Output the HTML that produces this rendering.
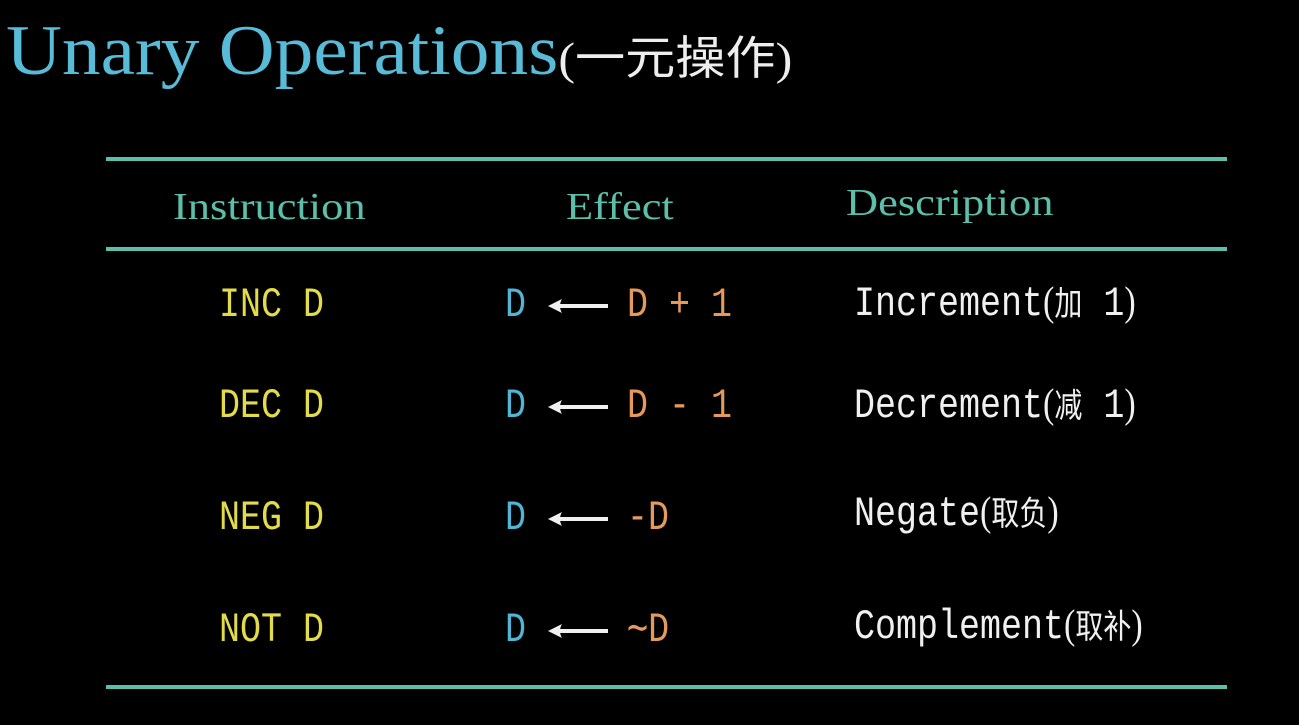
<!DOCTYPE html>
<html><head><meta charset="utf-8"><style>
body{margin:0;width:1299px;height:725px;background:#000;overflow:hidden;position:relative;font-family:"Liberation Serif","Noto Serif CJK SC",serif}
.a{position:absolute;white-space:nowrap}
.line{position:absolute;left:106px;width:1121px;height:4px;background:#5cbfa9}
.m{font-family:"Liberation Mono","Noto Sans CJK SC",monospace;font-size:35px;transform:scaleY(1.2);transform-origin:0 100%;line-height:1}
.h{color:#5cbfa9;font-size:38px;line-height:1;transform:scaleX(1.17);transform-origin:0 0}
.y{color:#e3dc4a}.b{color:#4fb6d6}.o{color:#e59a5c}.w{color:#f0f0f0}
.cj{font-family:"Noto Sans CJK SC",sans-serif;font-size:28px}
.p{font-family:"Liberation Serif",serif;font-size:34px}
.arr{position:absolute;left:548px;width:60px;height:16px}
</style></head><body>
<div class="a" style="left:6px;top:16px;font-size:71px;color:#58bcd8;line-height:1;transform:scaleX(1.09);transform-origin:0 0">Unary Operations<span style="color:#eee;font-size:46px;font-family:'Liberation Serif','Noto Sans CJK SC',sans-serif">(一元操作)</span></div>
<div class="line" style="top:157px"></div>
<div class="line" style="top:247px"></div>
<div class="line" style="top:685px"></div>
<div class="a h" style="left:173px;top:188px">Instruction</div>
<div class="a h" style="left:566px;top:188px">Effect</div>
<div class="a h" style="left:846px;top:184px">Description</div>

<svg width="0" height="0" style="position:absolute"><defs><g id="ar"><path d="M6 8H60" stroke="#f0f0f0" stroke-width="4"/><path d="M0 8L14 1Q10 8 14 15Z" fill="#f0f0f0"/></g></defs></svg>

<div class="a m y" style="left:219px;top:292px">INC D</div>
<div class="a m b" style="left:505px;top:292px">D</div>
<svg class="arr" style="top:298px" viewBox="0 0 60 16"><use href="#ar"/></svg>
<div class="a m o" style="left:627px;top:292px">D + 1</div>
<div class="a m w" style="left:854px;top:290px">Increment<span class="p">(</span><span class="cj">加</span> 1<span class="p">)</span></div>

<div class="a m y" style="left:219px;top:393px">DEC D</div>
<div class="a m b" style="left:505px;top:393px">D</div>
<svg class="arr" style="top:399px" viewBox="0 0 60 16"><use href="#ar"/></svg>
<div class="a m o" style="left:627px;top:393px">D - 1</div>
<div class="a m w" style="left:854px;top:392px">Decrement<span class="p">(</span><span class="cj">减</span> 1<span class="p">)</span></div>

<div class="a m y" style="left:219px;top:505px">NEG D</div>
<div class="a m b" style="left:505px;top:505px">D</div>
<svg class="arr" style="top:511px" viewBox="0 0 60 16"><use href="#ar"/></svg>
<div class="a m o" style="left:627px;top:505px">-D</div>
<div class="a m w" style="left:854px;top:500px">Negate<span class="p">(</span><span class="cj">取负</span><span class="p">)</span></div>

<div class="a m y" style="left:219px;top:617px">NOT D</div>
<div class="a m b" style="left:505px;top:617px">D</div>
<svg class="arr" style="top:623px" viewBox="0 0 60 16"><use href="#ar"/></svg>
<div class="a m o" style="left:627px;top:617px">∼D</div>
<div class="a m w" style="left:854px;top:613px">Complement<span class="p">(</span><span class="cj">取补</span><span class="p">)</span></div>
</body></html>
